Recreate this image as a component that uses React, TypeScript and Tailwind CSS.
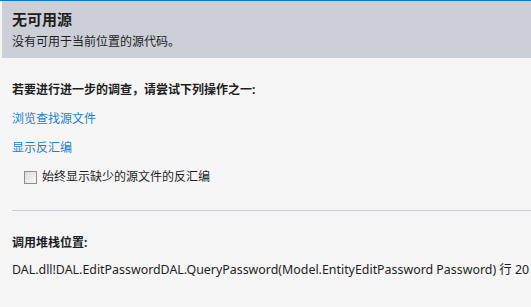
const font = { fontFamily: '"Noto Sans", "Noto Sans CJK SC", sans-serif' };

export default function App() {
  return (
    <div
      className="w-[531px] h-[307px] overflow-hidden bg-[#f5f5f5] border-t border-[#007acc] text-[#1e1e1e] text-[12px]"
      style={font}
    >
      <div className="ml-[2px] bg-[#ccced8] pt-[8px] pb-[8px] pl-[10px]">
        <div className="text-[15px] font-bold leading-[20px]">无可用源</div>
        <div className="mt-[5px] leading-[16px]">没有可用于当前位置的源代码。</div>
      </div>

      <div className="pl-[12px]">
        <div className="mt-[24px] font-bold leading-[16px]">
          若要进行进一步的调查，请尝试下列操作之一:
        </div>
        <div className="mt-[13px] leading-[16px] text-[#1b7fd1]">浏览查找源文件</div>
        <div className="mt-[13px] leading-[16px] text-[#1b7fd1]">显示反汇编</div>
        <label className="mt-[13px] flex items-center gap-[5px] pl-[12px] leading-[16px]">
          <span className="w-[13px] h-[13px] border border-[#8e8f8f] bg-gradient-to-br from-[#dcdcdc] to-[#f7f7f7]" />
          <span>始终显示缺少的源文件的反汇编</span>
        </label>
        <div className="mt-[25px] h-px bg-[#ccced8]" />
        <div className="mt-[24px] font-bold leading-[16px]">调用堆栈位置:</div>
        <div className="mt-[11px] leading-[16px] whitespace-nowrap text-[12.4px]">
          DAL.dll!DAL.EditPasswordDAL.QueryPassword(Model.EntityEditPassword Password) 行 20
        </div>
      </div>
    </div>
  );
}
